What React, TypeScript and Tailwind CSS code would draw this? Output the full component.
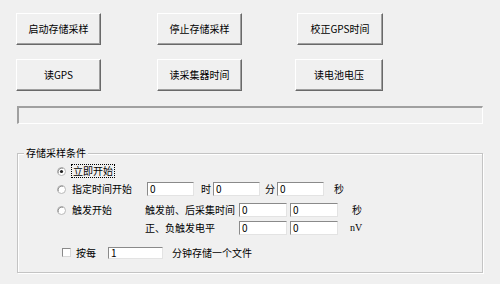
const font = "font-['Noto_Sans_CJK_SC','Noto_Sans',sans-serif]";

const Btn = ({ label, className = "" }: { label: string; className?: string }) => (
  <div
    className={`flex h-[32px] items-center justify-center border border-t-white border-l-white border-r-[#696969] border-b-[#696969] bg-[#f0f0f0] shadow-[inset_-1px_-1px_0_#a0a0a0] text-[10px] leading-none text-black ${className}`}
  >
    {label}
  </div>
);

const Field = ({ value, className = "" }: { value: string; className?: string }) => (
  <div
    className={`flex items-center border border-t-[#8a8a8a] border-l-[#8a8a8a] border-r-[#e3e3e3] border-b-[#e3e3e3] bg-white pl-[2px] text-[10px] leading-none ${className}`}
  >
    {value}
  </div>
);

const Radio = ({ checked = false }: { checked?: boolean }) => (
  <svg width="9" height="9" viewBox="0 0 9 9" className="shrink-0">
    <circle cx="4.5" cy="4.5" r="4" fill="#fff" stroke="#b8b8b8" strokeWidth="1" />
    <path d="M1.2 6.2 A4 4 0 0 1 6.2 1.2" fill="none" stroke="#8a8a8a" strokeWidth="1" />
    {checked && <circle cx="4.5" cy="4.5" r="1.6" fill="#222" />}
  </svg>
);

export default function App() {
  return (
    <div className={`h-[284px] w-[500px] overflow-hidden bg-[#f0f0f0] pl-[16px] pt-[13px] text-black ${font}`}>
      <div className="flex">
        <Btn label="启动存储采样" className="w-[85px]" />
        <Btn label="停止存储采样" className="ml-[56px] w-[85px]" />
        <Btn label="校正GPS时间" className="ml-[55px] w-[86px]" />
      </div>
      <div className="mt-[14px] flex">
        <Btn label="读GPS" className="w-[85px]" />
        <Btn label="读采集器时间" className="ml-[56px] w-[85px]" />
        <Btn label="读电池电压" className="ml-[53px] w-[88px]" />
      </div>

      <div className="ml-[1px] mt-[15px] h-[18px] w-[466px] border-2 border-t-[#a0a0a0] border-l-[#a0a0a0] border-r-white border-b-white border-r-[1px] border-b-[1px]" />

      <div className="relative ml-[1px] mt-[29px] h-[120px] w-[466px] border border-[#c4c4c4] shadow-[inset_1px_1px_0_#fff,1px_1px_0_#fff]">
        <span className="absolute -top-[7px] left-[6px] bg-[#f0f0f0] px-[2px] text-[10px] leading-[12px]">
          存储采样条件
        </span>

        <div className="pt-[10px] text-[10px] leading-none">
          <div className="flex h-[14px] items-center pl-[39px]">
            <Radio checked />
            <span className="ml-[5px] border border-dotted border-black px-[1px] py-[1px]">立即开始</span>
          </div>

          <div className="mt-[4px] flex h-[14px] items-center pl-[39px]">
            <Radio />
            <span className="ml-[6px] w-[75px]">指定时间开始</span>
            <Field value="0" className="h-[14px] w-[47px]" />
            <span className="ml-[7px]">时</span>
            <Field value="0" className="ml-[2px] h-[14px] w-[47px]" />
            <span className="ml-[5px]">分</span>
            <Field value="0" className="ml-[2px] h-[14px] w-[47px]" />
            <span className="ml-[10px]">秒</span>
          </div>

          <div className="mt-[7px] flex h-[14px] items-center pl-[39px]">
            <Radio />
            <span className="ml-[6px] w-[73px]">触发开始</span>
            <span className="w-[94px]">触发前、后采集时间</span>
            <Field value="0" className="h-[14px] w-[48px]" />
            <Field value="0" className="ml-[3px] h-[14px] w-[48px]" />
            <span className="ml-[14px]">秒</span>
          </div>

          <div className="mt-[4px] flex h-[14px] items-center pl-[127px]">
            <span className="w-[94px]">正、负触发电平</span>
            <Field value="0" className="h-[14px] w-[48px]" />
            <Field value="0" className="ml-[3px] h-[14px] w-[48px]" />
            <span className="ml-[12px] font-['Liberation_Serif',serif]">nV</span>
          </div>

          <div className="mt-[11px] flex h-[13px] items-center pl-[44px]">
            <div className="h-[9px] w-[9px] border border-t-[#8a8a8a] border-l-[#8a8a8a] border-r-[#d8d8d8] border-b-[#d8d8d8] bg-white" />
            <span className="ml-[5px]">按每</span>
            <Field value="1" className="ml-[12px] h-[12px] w-[55px]" />
            <span className="ml-[9px]">分钟存储一个文件</span>
          </div>
        </div>
      </div>
    </div>
  );
}
